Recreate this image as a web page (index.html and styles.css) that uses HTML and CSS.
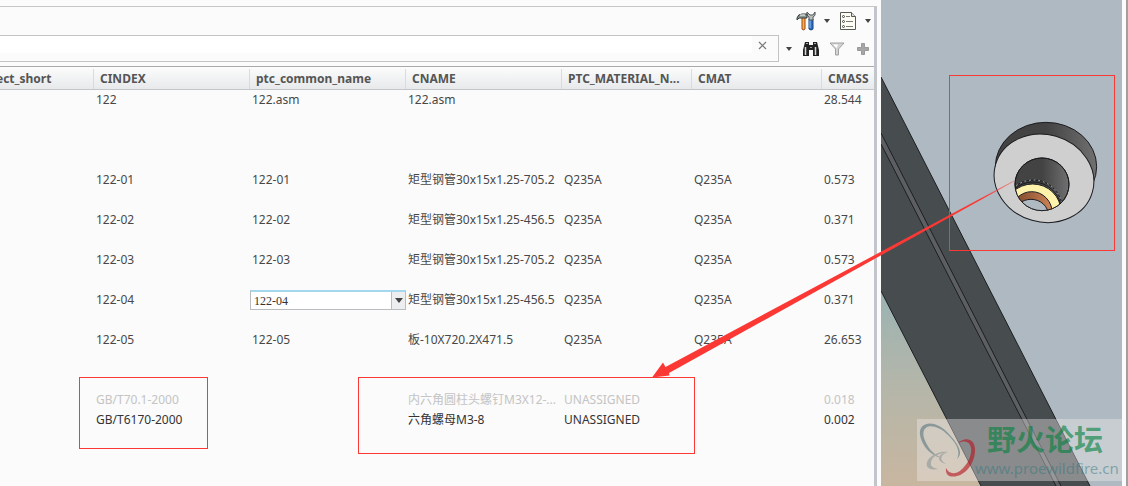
FILE: index.html
```
<!DOCTYPE html>
<html lang="zh">
<head>
    <meta charset="UTF-8">
    <meta name="viewport" content="width=device-width, initial-scale=1.0">
    <title>122.asm</title>
    <link rel="stylesheet" href="styles.css">
</head>
<body>

    <div class="page">
        <div class="tree-panel">
            <div class="toolbar">
                <button class="tool" aria-label="Settings">
                    <svg width="20" height="20" viewBox="0 0 20 20">
                        <path d="M13 8h4v10q-2 2-4 0z" fill="#2d6fc9" stroke="#1b4279"/>
                        <path d="M14 9v8" stroke="#8ec5ff"/>
                        <path d="M11 1q-1 4 2 5v3h4V6q3-1 2-5l-2 3h-3z" fill="#b8bec2" stroke="#555"/>
                        <path d="M6 6h3v12q-2 2-3 0z" fill="#f0b43c" stroke="#a6401c"/>
                        <path d="M1 7q1-4 5-4h5v4H5q-2-1-4 2z" fill="#8c9694" stroke="#333b3a"/>
                        <path d="M4 4h5" stroke="#fff"/>
                    </svg>
                </button>
                <button class="caret" aria-label="Settings menu"></button>
                <button class="tool tool-list" aria-label="Show">
                    <svg width="18" height="20" viewBox="0 0 18 20">
                        <path d="M1.500 1.500h11l4 4v13h-15z" fill="#fdfdf4" stroke="#555c55"/>
                        <path d="M12.500 1.500v4h4" fill="#ddd" stroke="#555c55"/>
                        <path d="M7 5.500h4M7 10.500h7M7 15.500h7" stroke="#777"/>
                        <g fill="#fff" stroke="#444">
                            <circle cx="4.500" cy="5.500" r="1"/>
                            <circle cx="4.500" cy="10.500" r="1"/>
                            <circle cx="4.500" cy="15.500" r="1"/>
                        </g>
                    </svg>
                </button>
                <button class="caret" aria-label="Show menu"></button>
            </div>

            <div class="search-row">
                <div class="search-box">
                    <input type="text" class="search-input" aria-label="Search">
                    <button class="clear" aria-label="Clear">
                        <svg width="10" height="10" viewBox="0 0 10 10"><path d="M1 1l7 7M8 1l-7 7" stroke="#777" stroke-width="1.200"/></svg>
                    </button>
                </div>
                <button class="caret" aria-label="Search options"></button>
                <button class="tool tool-find" aria-label="Find">
                    <svg width="18" height="16" viewBox="0 0 18 16">
                        <path d="M3 1h4v3h4V1h4l2 8v6h-6V9H7v6H1V9z" fill="#222"/>
                        <path d="M3.500 6v8M13.500 6v8" stroke="#d8d8d8" stroke-width="1.500"/>
                        <path d="M4 2.500h2M12 2.500h2" stroke="#aaa"/>
                        <path d="M8 6.500h2" stroke="#999"/>
                    </svg>
                </button>
                <button class="tool tool-filter" aria-label="Filter">
                    <svg width="16" height="14" viewBox="0 0 16 14">
                        <path d="M1 1h14L9.500 7v6h-3V7z" fill="#d4d4d4" stroke="#a0a0a0"/>
                        <path d="M4 2.500h5L7.500 6z" fill="#fff"/>
                    </svg>
                </button>
                <button class="tool tool-add" aria-label="Add">
                    <svg width="12" height="12" viewBox="0 0 12 12"><path d="M4.500.5h3v4h4v3h-4v4h-3v-4h-4v-3h4z" fill="#a6a6a6" stroke="#999"/></svg>
                </button>
            </div>

            <table class="tree-table">
                <colgroup>
                    <col class="col-short">
                    <col class="col-wide">
                    <col class="col-wide">
                    <col class="col-wide">
                    <col class="col-mat">
                    <col class="col-mat">
                    <col>
                </colgroup>
                <thead>
                    <tr>
                        <th class="cut"><span>ect_short</span></th>
                        <th><span>CINDEX</span></th>
                        <th><span>ptc_common_name</span></th>
                        <th><span>CNAME</span></th>
                        <th><span>PTC_MATERIAL_N...</span></th>
                        <th><span>CMAT</span></th>
                        <th><span>CMASS</span></th>
                    </tr>
                </thead>
                <tbody>
                    <tr class="gap-3"><td></td><td>122</td><td>122.asm</td><td>122.asm</td><td></td><td></td><td>28.544</td></tr>
                    <tr class="gap-1"><td></td><td>122-01</td><td>122-01</td><td>矩型钢管30x15x1.25-705.2</td><td>Q235A</td><td>Q235A</td><td>0.573</td></tr>
                    <tr class="gap-1"><td></td><td>122-02</td><td>122-02</td><td>矩型钢管30x15x1.25-456.5</td><td>Q235A</td><td>Q235A</td><td>0.371</td></tr>
                    <tr class="gap-1"><td></td><td>122-03</td><td>122-03</td><td>矩型钢管30x15x1.25-705.2</td><td>Q235A</td><td>Q235A</td><td>0.573</td></tr>
                    <tr class="gap-1">
                        <td></td>
                        <td>122-04</td>
                        <td class="editing">
                            <div class="combo">
                                <select aria-label="ptc_common_name">
                                    <option selected>122-04</option>
                                </select>
                                <span class="combo-arrow"></span>
                            </div>
                        </td>
                        <td>矩型钢管30x15x1.25-456.5</td>
                        <td>Q235A</td>
                        <td>Q235A</td>
                        <td>0.371</td>
                    </tr>
                    <tr class="gap-2"><td></td><td>122-05</td><td>122-05</td><td>板-10X720.2X471.5</td><td>Q235A</td><td>Q235A</td><td>26.653</td></tr>
                    <tr class="suppressed"><td></td><td>GB/T70.1-2000</td><td></td><td>内六角圆柱头螺钉M3X12-...</td><td>UNASSIGNED</td><td></td><td>0.018</td></tr>
                    <tr class="current"><td></td><td>GB/T6170-2000</td><td></td><td>六角螺母M3-8</td><td>UNASSIGNED</td><td></td><td>0.002</td></tr>
                </tbody>
            </table>
        </div>

        <div class="model-view">
            <svg class="model" viewBox="0 0 241 486" preserveAspectRatio="xMinYMin slice">
                <defs>
                    <linearGradient id="floor" x1="0" y1="0" x2="0" y2="1">
                        <stop offset="0" stop-color="#9bb3b3"/>
                        <stop offset="0.500" stop-color="#b5b6a9"/>
                        <stop offset="1" stop-color="#c8b6a0"/>
                    </linearGradient>
                    <linearGradient id="wall">
                        <stop offset="0.500" stop-color="#434343"/>
                        <stop offset="1" stop-color="#707070"/>
                    </linearGradient>
                    <linearGradient id="copper">
                        <stop offset="0.300" stop-color="#8f5535"/>
                        <stop offset="1" stop-color="#d08558"/>
                    </linearGradient>
                    <clipPath id="bore"><ellipse cx="246" cy="253" rx="81" ry="79"/></clipPath>
                </defs>
                <rect width="241" height="486" fill="#aeb9c2"/>
                <path d="M0 291L100 486H0z" fill="url(#floor)"/>
                <path d="M0 77L209 486H100L0 291z" fill="#474c4f"/>
                <path d="M0 133L180 486H175L0 144z" fill="#5c5e62"/>
                <path d="M0 77L209 486M0 291L100 486M0 133L180 486M0 144L175 486" fill="none" stroke="#1d1f22"/>
                <!-- counterbored hole, drawn at three times its size -->
                <g transform="translate(79 100) scale(0.3333)" stroke="#1c1c20" stroke-width="3">
                    <ellipse cx="258" cy="200" rx="152" ry="133" fill="url(#wall)"/>
                    <ellipse cx="252" cy="235" rx="151" ry="131" transform="rotate(16 252 235)" fill="#cfcfcf"/>
                    <ellipse cx="246" cy="253" rx="81" ry="79" fill="url(#wall)"/>
                    <g clip-path="url(#bore)">
                        <ellipse cx="220" cy="330" rx="88" ry="90" fill="none"/>
                        <ellipse cx="220" cy="330" rx="88" ry="90" fill="none" stroke="#aeb9c2" stroke-dasharray="5 9"/>
                        <ellipse cx="219" cy="332" rx="85" ry="86" fill="none"/>
                        <ellipse cx="218" cy="335" rx="85" ry="83" fill="#fff3ac"/>
                        <ellipse cx="215" cy="340" rx="62" ry="65" fill="url(#copper)"/>
                        <ellipse cx="213" cy="345" rx="52" ry="47" fill="#aeb9c2"/>
                    </g>
                    <ellipse cx="246" cy="253" rx="81" ry="79" fill="none"/>
                </g>
            </svg>
            <div class="watermark">
                <svg class="watermark-logo" width="60" height="62" viewBox="0 0 60 62">
                    <path fill-rule="evenodd" fill="#5b7780" d="M4 20C-2 3 17-2 32 15c11 12 14 20 8 25 4-8-1-16-9-24C18 3 3 5 7 19c3 9 9 16 17 20C14 36 7 29 4 20z"/>
                    <path fill="#8b9796" d="M31 33c-10-2-23 6-21 14 1 3 5 4 11 3-5-1-8-3-7-7 1-6 9-9 17-10zM31 33c-8 3-9 8-2 12-10-3-9-10 2-12z"/>
                    <path fill="#b5121b" d="M41 24c8-7 18-4 17 9-1 12-9 22-18 24-7 2-12-1-11-8 3 6 9 7 15 2 7-6 11-15 10-22-1-7-7-8-13-5z"/>
                </svg>
                <div class="watermark-text">
                    <div class="watermark-name">野火论坛</div>
                    <div class="watermark-url">www.proewildfire.cn</div>
                </div>
            </div>
        </div>
        <div class="window-edge"></div>
    </div>

    <!-- red callouts over the window -->
    <svg class="callouts" width="1128" height="486" viewBox="0 0 1128 486">
        <defs>
            <linearGradient id="tail" gradientUnits="userSpaceOnUse" x1="980" y1="0" x2="1016" y2="0">
                <stop offset="0" stop-color="#fc3835"/>
                <stop offset="1" stop-color="#fc3835" stop-opacity="0.400"/>
            </linearGradient>
        </defs>
        <g fill="none" stroke="#fc3835">
            <rect x="79.500" y="377.500" width="128" height="71"/>
            <rect x="358.500" y="377.500" width="336" height="76"/>
            <rect x="949.500" y="75.500" width="165" height="175"/>
        </g>
        <path d="M652 377.500L663 362.500L665.500 367L1014 180.500V181.500L669 373L669.500 375.500z" fill="url(#tail)"/>
    </svg>

</body>
</html>
```

FILE: styles.css
```
body {
    margin: 0;
    font-family: "Noto Sans", "Noto Sans CJK SC", sans-serif;
    font-size: 12px;
    color: #484848;
    background-color: #fbfbfb;
    overflow: hidden;
}
button {
    border: none;
    background: none;
    padding: 0;
    display: flex;
    align-items: center;
    justify-content: center;
}
.page {
    display: flex;
    height: 100vh;
}
.tree-panel {
    flex: 1;
    min-width: 0;
    margin-top: 6px;
    margin-right: 4px;
    border-top: 1px solid #c6c6c6;
    border-right: 3px solid #c2c6ca;
    overflow: hidden;
}
.toolbar, .search-row {
    display: flex;
    align-items: center;
    justify-content: flex-end;
}
.toolbar {
    height: 28px;
    padding-right: 3px;
}
.toolbar .caret {
    margin: 0 6px 0 8px;
}
.toolbar .caret:last-child {
    margin-right: 0;
}
.tool-list {
    margin-left: 3px;
}
.caret::after {
    content: "";
    border: 3px solid transparent;
    border-top: 4px solid #444;
    border-bottom: none;
}
.search-row {
    padding-right: 5px;
}
.search-box {
    flex: 1;
    display: flex;
    align-items: flex-start;
    height: 25px;
    border: 1px solid #c3c3c3;
    border-left: none;
    margin-right: 7px;
}
.search-input {
    flex: 1;
    height: 17px;
    border: none;
    padding: 0 4px;
    background: white;
    outline: none;
}
.clear {
    width: 22px;
    height: 20px;
    margin-right: 4px;
}
.tool-find {
    margin-left: 10px;
}
.tool-filter {
    margin-left: 9px;
}
.tool-add {
    margin-left: 12px;
}
.tree-table {
    width: 100%;
    margin-top: 4px;
    table-layout: fixed;
    border-collapse: separate;
    border-spacing: 0;
    border-top: 1px solid #a9a9a9;
}
.col-short {
    width: 93px;
}
.col-wide {
    width: 156px;
}
.col-mat {
    width: 130px;
}
th {
    height: 23px;
    padding: 2px 0 0;
    text-align: left;
    font-size: 12px;
    line-height: 20px;
    color: #555;
    background: linear-gradient(#fcfcfc, #e7e9eb);
    border-bottom: 1px solid #c2c6c9;
    white-space: nowrap;
    box-sizing: border-box;
}
th span {
    display: block;
    padding-left: 6px;
    border-left: 1px solid #d9dbdd;
}
/* column is scrolled part of the way out of the panel */
th.cut span {
    padding: 0;
    border: none;
    text-indent: -4px;
}
td {
    height: 20px;
    padding: 0 0 0 3px;
    line-height: 20px;
    white-space: nowrap;
    vertical-align: top;
}
/* space for the child rows that have no parameters */
.gap-1 td {
    height: 40px;
}
.gap-2 td {
    height: 60px;
}
.gap-3 td {
    height: 80px;
}
.suppressed {
    color: #c4c4c4;
}
.current {
    color: #333;
}
td.editing {
    padding: 0 0 0 1px;
}
.combo {
    display: flex;
    height: 20px;
    box-sizing: border-box;
    margin-right: -1px;
    border: 1px solid #b9bdc0;
    border-top: 2px solid #a5d8ee;
    background: white;
    position: relative;
}
.combo select {
    width: 100%;
    appearance: none;
    border: none;
    padding: 0 16px 0 3px;
    background: none;
    font-family: "Liberation Serif", serif;
    font-size: 12px;
    color: #333;
}
.combo-arrow {
    position: absolute;
    top: 0;
    right: 0;
    bottom: 0;
    width: 13px;
    display: flex;
    align-items: center;
    justify-content: center;
    background: #eceef0;
    border-left: 1px solid #b9bdc0;
    pointer-events: none;
}
.combo-arrow::after {
    content: "";
    border: 4px solid transparent;
    border-top: 5px solid #444;
    border-bottom: none;
}
.model-view {
    width: 241px;
    position: relative;
    overflow: hidden;
    background: #aeb9c2;
}
.model {
    display: block;
    width: 100%;
    height: 100%;
}
.watermark {
    position: absolute;
    right: 0;
    bottom: 5px;
    width: 205px;
    height: 62px;
    display: flex;
    background: rgba(240, 235, 235, 0.4);
}
.watermark-logo {
    flex: none;
    opacity: 0.6;
}
.watermark-text {
    margin-left: -2px;
}
.watermark-name {
    padding-left: 12px;
    font-family: "Noto Sans CJK SC", sans-serif;
    font-size: 29px;
    font-weight: bold;
    line-height: 38px;
    color: rgba(0, 128, 60, 0.6);
}
.watermark-url {
    font-size: 15px;
    line-height: 22px;
    color: rgba(50, 120, 125, 0.5);
}
.window-edge {
    width: 2px;
    border-left: 4px solid #fbfbfb;
    background: #a0a0a0;
}
.callouts {
    position: absolute;
    top: 0;
    left: 0;
    pointer-events: none;
}
```
